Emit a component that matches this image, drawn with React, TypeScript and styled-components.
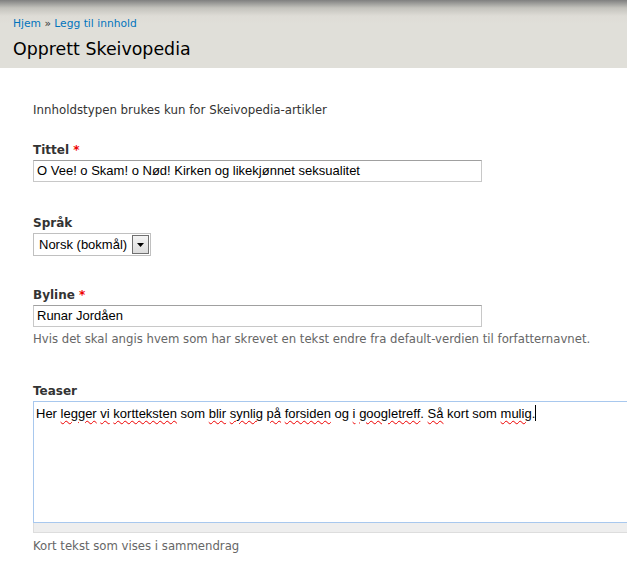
import * as React from 'react';
import styled, {createGlobalStyle} from 'styled-components';

const GlobalStyle = createGlobalStyle`
	html, body {
		margin: 0;
		padding: 0;
		background: #fff;
		overflow: hidden;
	}
	body {
		font-family: "DejaVu Sans", Verdana, sans-serif;
		color: #222;
	}
`;

const Page = styled.div`
	width: 627px;
	height: 581px;
	overflow: hidden;
`;

const Header = styled.div`
	height: 68px;
	box-sizing: border-box;
	padding: 17px 13px 0;
	background: linear-gradient(to bottom, #7f7f7f 0px, #c4c3bd 8px, #dedcd6 16px, #e0dfd9 24px);
`;

const Breadcrumb = styled.div`
	font-size: 10.7px;
	line-height: 14px;
	color: #333;
	a {
		color: #0074bd;
		text-decoration: none;
	}
`;

const Title = styled.h1`
	margin: 6px 0 0;
	font-size: 17.4px;
	line-height: 24px;
	font-weight: normal;
	color: #000;
`;

const Form = styled.div`
	padding: 35px 0 0 33px;
	display: flex;
	flex-direction: column;
`;

const Intro = styled.p`
	margin: 0 0 25px;
	font-size: 11.8px;
	line-height: 14px;
	color: #333;
`;

const Field = styled.div<{$gap?: number}>`
	display: flex;
	flex-direction: column;
	align-items: flex-start;
	margin-bottom: ${(p) => p.$gap ?? 0}px;
`;

const Label = styled.label`
	font-size: 12px;
	line-height: 16px;
	font-weight: bold;
	color: #333;
	margin-bottom: 2px;
`;

const Required = styled.span`
	color: #e00;
	font-weight: bold;
`;

const TextInput = styled.div`
	box-sizing: border-box;
	width: 449px;
	height: 22px;
	padding: 0 3px;
	border: 1px solid #c8c8c8;
	border-top-color: #a0a0a0;
	font-family: "Liberation Sans", Arial, sans-serif;
	font-size: 13px;
	line-height: 20px;
	color: #000;
	white-space: nowrap;
`;

const Select = styled.div`
	box-sizing: border-box;
	width: 118px;
	height: 23px;
	border: 1px solid #c0c0c0;
	display: flex;
	align-items: center;
	justify-content: space-between;
	padding: 1px;
`;

const SelectValue = styled.span`
	font-family: "Liberation Sans", Arial, sans-serif;
	font-size: 13px;
	color: #000;
	padding-left: 4px;
	white-space: nowrap;
`;

const SelectButton = styled.span`
	box-sizing: border-box;
	flex: none;
	width: 17px;
	height: 19px;
	border: 1px solid #707070;
	background: linear-gradient(to bottom, #f4f4f4, #dcdcdc);
	display: flex;
	align-items: center;
	justify-content: center;
`;

const Description = styled.div<{$top: number}>`
	margin-top: ${(p) => p.$top}px;
	font-size: 11.7px;
	line-height: 14px;
	color: #666;
`;

const TextArea = styled.div`
	box-sizing: border-box;
	width: 640px;
	height: 122px;
	border: 1px solid #a8c8ee;
	padding: 3px 2px;
	font-family: "Liberation Sans", Arial, sans-serif;
	font-size: 13px;
	line-height: 17px;
	color: #000;
	white-space: nowrap;
`;

const Misspelled = styled.span`
	text-decoration: underline wavy #e00;
	text-decoration-thickness: 1px;
	text-underline-offset: 2px;
`;

const Caret = styled.span`
	display: inline-block;
	width: 1px;
	height: 16px;
	background: #000;
	vertical-align: -3px;
`;

const Grippie = styled.div`
	box-sizing: border-box;
	width: 640px;
	height: 10px;
	background: #eee;
	border: 1px solid #ddd;
	border-top: none;
`;

const teaser: [string, boolean][] = [
	['Her ', false],
	['legger', true],
	[' ', false],
	['vi', true],
	[' ', false],
	['kortteksten', true],
	[' som ', false],
	['blir', true],
	[' ', false],
	['synlig', true],
	[' ', false],
	['på', true],
	[' ', false],
	['forsiden', true],
	[' og ', false],
	['i', true],
	[' ', false],
	['googletreff', true],
	['. ', false],
	['Så', true],
	[' kort som ', false],
	['mulig', true],
	['.', false],
];

const App: React.FC = () => (
	<Page>
		<GlobalStyle />
		<Header>
			<Breadcrumb>
				<a href="#">Hjem</a> » <a href="#">Legg til innhold</a>
			</Breadcrumb>
			<Title>Opprett Skeivopedia</Title>
		</Header>
		<Form>
			<Intro>Innholdstypen brukes kun for Skeivopedia-artikler</Intro>
			<Field $gap={33}>
				<Label>
					Tittel <Required>*</Required>
				</Label>
				<TextInput>O Vee! o Skam! o Nød! Kirken og likekjønnet seksualitet</TextInput>
			</Field>
			<Field $gap={31}>
				<Label>Språk</Label>
				<Select>
					<SelectValue>Norsk (bokmål)</SelectValue>
					<SelectButton>
						<svg width="7" height="4" viewBox="0 0 7 4">
							<path d="M0 0h7L3.5 4z" fill="#000" />
						</svg>
					</SelectButton>
				</Select>
			</Field>
			<Field $gap={37}>
				<Label>
					Byline <Required>*</Required>
				</Label>
				<TextInput>Runar Jordåen</TextInput>
				<Description $top={5}>
					Hvis det skal angis hvem som har skrevet en tekst endre fra default-verdien til forfatternavnet.
				</Description>
			</Field>
			<Field>
				<Label>Teaser</Label>
				<TextArea>
					{teaser.map(([word, bad], i) =>
						bad ? <Misspelled key={i}>{word}</Misspelled> : <React.Fragment key={i}>{word}</React.Fragment>
					)}
					<Caret />
				</TextArea>
				<Grippie />
				<Description $top={6}>Kort tekst som vises i sammendrag</Description>
			</Field>
		</Form>
	</Page>
);

export default App;
